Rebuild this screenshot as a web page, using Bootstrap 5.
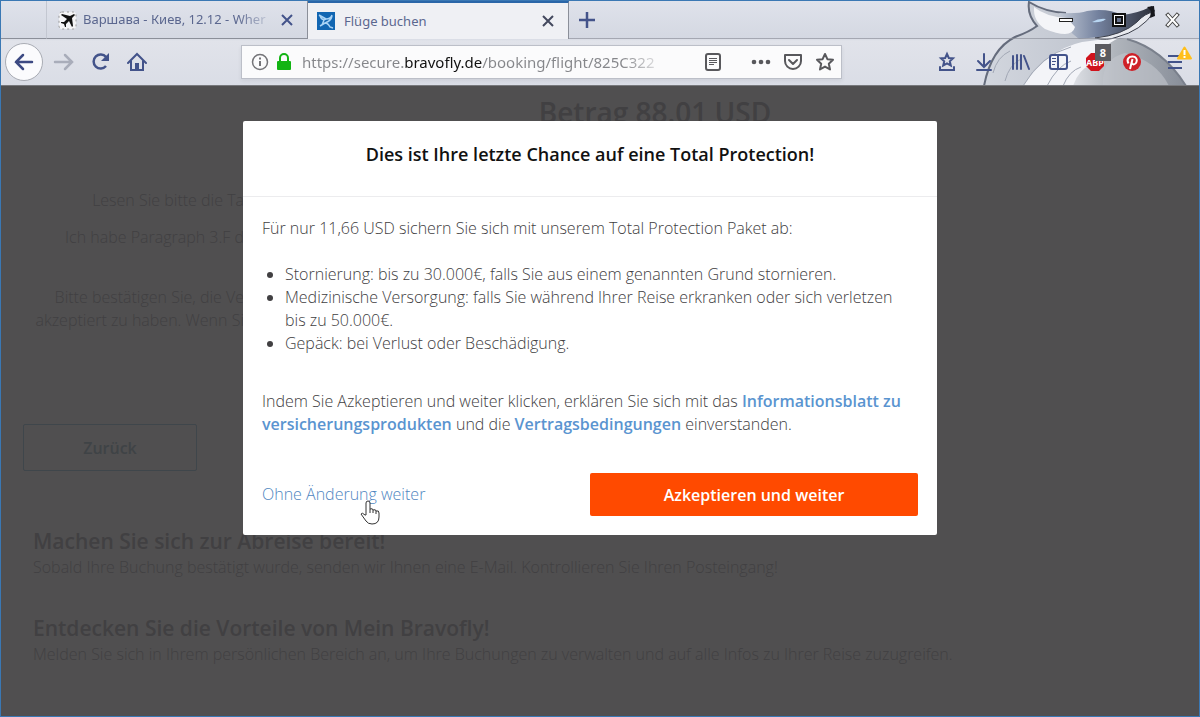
<!DOCTYPE html>
<html lang="de">
<head>
<meta charset="utf-8">
<meta name="viewport" content="width=device-width, initial-scale=1">
<title>Flüge buchen</title>
<link href="https://cdn.jsdelivr.net/npm/bootstrap@5.3.0/dist/css/bootstrap.min.css" rel="stylesheet">
<style>
  body { font-family: "Open Sans", sans-serif; font-size: 16px; line-height: 23px; font-weight: 300; color: #4c4c50; }
  .window-frame { border: 1px solid #3a78b4; }

  /* browser chrome */
  .chrome { background: linear-gradient(#dfe2eb, #d4d8e2 37px, #e1e3ea 40px, #dadde6); color: #43538a; font-family: "Noto Sans", sans-serif; font-weight: 400; border-bottom: 1px solid #77787c; }
  .fox { right: 0; top: 0; width: 224px; height: 84px; }
  .tab-strip { height: 38px; }
  .tab-item { border-right: 1px solid #8b8f99; border-bottom: 1px solid #8b8f99; font-size: 13px; color: #5b678f; }
  .tab-stub { width: 46px; border-right-color: #c3c7d1; }
  .tab-wide { width: 261px; }
  .tab-item.tab-active { background: #eff0f4; border-top: 2px solid #2a66a8; border-bottom: 0; }
  .tab-name { -webkit-mask-image: linear-gradient(to right, #000 80%, transparent); mask-image: linear-gradient(to right, #000 80%, transparent); }
  .tab-item a { color: #5b678f; }
  .tab-rest { border-bottom: 1px solid #8b8f99aa; }
  .tool-row { height: 46px; }
  .icon-btn { color: inherit; line-height: 0; }
  .round-btn, .round-btn:hover { width: 38px; height: 38px; background: #fbfbfd; border: 1px solid #a9acb4; }
  .address { flex: 0 1 601px; margin-left: 94px; height: 34px; background: #fbfbfc; border: 1px solid #bcbfc8; padding: 0 6px 0 8px; }
  .address-icons { gap: 12px; }
  .address-input { min-width: 0; font-size: 15px; line-height: 24px; color: transparent; -webkit-text-fill-color: transparent; outline: 0;
    background: linear-gradient(to right, #85868a 101px, #111 101px 180px, #85868a 180px 320px, #85868a22 360px); -webkit-background-clip: text; background-clip: text; }
  .tool-icons { gap: 13px; padding-right: 6px; }
  .counter { left: 12px; top: -6px; width: 16px; height: 17px; font-size: 11px; line-height: 17px; background: #5b5b60; }

  /* booking page behind the dialog */
  .page { background: #504f50; color: #414042; }
  .page-total { font-size: 28px; line-height: 36px; font-weight: 600; padding: 8px 0 0 110px; }
  .page h2 { font-size: 21px; line-height: 30px; font-weight: 600; margin: 0; }
  .page-body { padding: 59px 32px 0 22px; }
  .terms { width: 221px; }
  .terms p { margin-bottom: 14px; }
  .terms .terms-last { margin: 37px 0 92px; }
  .back-btn, .back-btn:hover { width: 174px; height: 47px; border: 1px solid #3f464b; border-radius: 2px; color: #3f4346; font-weight: 600; }
  .page-info { padding: 55px 0 0 10px; }
  .page-info p { margin: 0 0 34px; }

  /* dialog */
  .offer-layer { padding: 35px 20px 0 0; }
  .offer { width: 694px; background: #fff; border-radius: 2px; }
  .offer-head { padding: 19px 19px 28px; border-bottom: 1px solid #ececee; }
  .offer-head h1 { font-size: 18px; line-height: 28px; font-weight: 600; color: #111; }
  .offer-body { padding: 20px 19px 19px; }
  .offer-body p, .offer-list { margin-bottom: 23px; }
  .offer-list { padding: 0 16px 0 23px; }
  .offer-list + p { margin: 35px 0 37px; }
  .offer a { color: #5a94d0; }
  .offer .skip { color: #4f86bf; }
  .accept, .accept:hover { background: #ff4a00; color: #fff; font-weight: 600; width: 328px; height: 43px; border-radius: 2px; }
  .hand { left: 96px; top: 16px; }
</style>
</head>
<body>
<div class="window-frame min-vh-100 d-flex flex-column">
  <header class="chrome position-relative">
    <svg class="fox position-absolute" viewBox="0 0 224 84" aria-hidden="true">
      <defs>
        <linearGradient id="fur" x1="0" y1="0" x2="1" y2="0"><stop offset="0" stop-color="#d2d6de"/><stop offset="1" stop-color="#bfc4ce"/></linearGradient>
        <linearGradient id="face" x1="0" y1="0" x2="1" y2="0"><stop offset="0" stop-color="#c3cad6"/><stop offset=".4" stop-color="#74829f"/><stop offset="1" stop-color="#2b2e38"/></linearGradient>
        <linearGradient id="tail" x1="0" y1="0" x2="1" y2="0"><stop offset="0" stop-color="#e3e5ea"/><stop offset=".4" stop-color="#b0b5bc"/><stop offset="1" stop-color="#878d98"/></linearGradient>
      </defs>
      <path d="M105 40Q130 32 152 38Q188 48 211 85H92Z" fill="url(#tail)"/>
      <path d="M152 38Q188 48 211 85" fill="none" stroke="#7a808c" stroke-width="2"/>
      <path d="M128 85Q126 58 150 52Q182 60 194 85Z" fill="#c3c7cd" opacity=".6"/>
      <path d="M9 85Q16 48 40 36Q54 31 62 25Q52 14 54 1Q70 11 91 12L120 16L125 38Q92 62 80 85Z" fill="url(#fur)"/>
      <path d="M9 85Q16 48 40 36Q54 31 62 25Q52 14 54 1Q70 11 91 12" fill="none" stroke="#656c7c" stroke-width="2"/>
      <path d="M48 85Q72 49 107 41L146 36Q124 46 116 64Q104 68 98 85Z" fill="#f3f4f8"/>
      <path d="M48 85Q66 54 96 46M72 85Q82 65 96 60M88 85Q94 70 106 66M18 72Q22 56 35 50M30 80Q34 64 46 58" fill="none" stroke="#a2a8b5"/>
      <path d="M84 12Q104 13 112 10Q134 7 146 14Q162 13 177 5L180 10Q165 27 142 34L104 38Q92 30 84 12Z" fill="url(#face)"/>
      <path d="M59 6Q71 16 92 17L100 26Q98 33 90 33Q82 33 70 28Q58 20 59 6Z" fill="#f4f5f8"/>
      <path d="M120 37Q148 34 162 21Q170 12 179 11Q166 30 142 36Q132 40 120 37Z" fill="#e8eaef" stroke="#3b3f4b"/>
      <path d="M172 6L179 5L180 15L175 17L176 10Z" fill="#17181d"/>
      <path d="M117 21Q124 17 131 18Q126 22 117 21Z" fill="#b8d6f2"/>
    </svg>
    <nav class="tab-strip d-flex position-relative" aria-label="Tabs">
      <div class="tab-item tab-stub"></div>
      <div class="tab-item tab-wide d-flex align-items-center ps-2">
        <svg width="24" height="20" viewBox="0 0 24 20" class="flex-shrink-0"><rect x="4" y="2" width="17" height="17" rx="3" fill="#f4f4f6" stroke="#999" stroke-dasharray="2 3"/><path d="M19 4l-4 2-8-2-1 1 6 4-3 3-3 0 0 1 3 1 1 3 1 0 0-3 3-3 3 6 1-1-1-8 3-3z" fill="#111"/></svg>
        <a href="#" class="tab-name text-nowrap flex-grow-1 text-decoration-none ms-1">Варшава - Киев, 12.12 - Wher</a>
        <button class="btn p-0 border-0 icon-btn me-2" aria-label="Tab schließen"><svg width="24" height="16" viewBox="0 0 24 16"><path d="M7 3l10 10M17 3L7 13" stroke="#43538a" stroke-width="2"/></svg></button>
      </div>
      <div class="tab-item tab-wide tab-active d-flex align-items-center ps-2">
        <svg width="20" height="20" viewBox="0 0 20 20"><rect x="1" y="1" width="18" height="18" fill="#1266b2"/><path d="M3 4l7 4q5 0 6-4M4 5q2 5 6 3M16 5q-1 5-7 7l-5 3M9 12q3 0 5 4l3 1M8 9l-2 5" fill="none" stroke="#a9d3f5" stroke-width="1.500"/></svg>
        <a href="#" class="text-decoration-none flex-grow-1 ms-2">Flüge buchen</a>
        <button class="btn p-0 border-0 icon-btn mx-2" aria-label="Tab schließen"><svg width="24" height="16" viewBox="0 0 24 16"><path d="M7 3l10 10M17 3L7 13" stroke="#44495e" stroke-width="2"/></svg></button>
      </div>
      <div class="tab-rest flex-grow-1 d-flex align-items-center">
        <button class="btn p-0 border-0 icon-btn ms-2" aria-label="Neuer Tab"><svg width="20" height="20" viewBox="0 0 20 20"><path d="M10 2v16M2 10h16" stroke="#43538a" stroke-width="2.500"/></svg></button>
        <div class="ms-auto d-flex">
          <button class="btn p-0 border-0 icon-btn" aria-label="Minimieren"><svg width="54" height="20" viewBox="0 0 54 20"><rect x="20.500" y="8.500" width="13" height="3" fill="#fff" stroke="#222"/></svg></button>
          <button class="btn p-0 border-0 icon-btn" aria-label="Maximieren"><svg width="52" height="20" viewBox="0 0 52 20"><rect x="19" y="3" width="14" height="14" fill="#111"/><rect x="21" y="5" width="10" height="10" fill="#fff"/><rect x="22" y="6" width="8" height="8" fill="#111"/><rect x="24" y="8" width="4" height="4" fill="#667089"/></svg></button>
          <button class="btn p-0 border-0 icon-btn" aria-label="Schließen"><svg width="54" height="20" viewBox="0 0 54 20" stroke-linecap="square"><path d="M23 5l9 10M32 5l-9 10" stroke="#444" stroke-width="4"/><path d="M23 5l9 10M32 5l-9 10" stroke="#fff" stroke-width="2"/></svg></button>
        </div>
      </div>
    </nav>
    <div class="tool-row d-flex align-items-center position-relative ps-1">
      <button class="btn p-0 icon-btn round-btn rounded-circle" aria-label="Zurück"><svg width="24" height="24" viewBox="0 0 24 24" fill="none" stroke="#3d4a83" stroke-width="2.500" stroke-linecap="round"><path d="M20 12H4M11 5l-7 7 7 7"/></svg></button>
      <button class="btn p-0 border-0 icon-btn ms-2" aria-label="Vor"><svg width="24" height="24" viewBox="0 0 24 24" fill="none" stroke="#a9adba" stroke-width="2.500" stroke-linecap="round"><path d="M4 12h16M14 5l7 7-7 7"/></svg></button>
      <button class="btn p-0 border-0 icon-btn ms-3" aria-label="Neu laden"><svg width="20" height="20" viewBox="0 0 20 20" fill="none" stroke="#43538a"><path d="M15 14A7 7 0 1 1 15 5" stroke-width="2.500"/><path d="M18 1v8h-8z" fill="#43538a" stroke="none"/></svg></button>
      <button class="btn p-0 border-0 icon-btn ms-3" aria-label="Startseite"><svg width="20" height="20" viewBox="0 0 20 20" fill="none" stroke="#43538a" stroke-width="2"><path d="M1 11l9-9 9 9M4 9v9h12V9" stroke-linecap="round"/><path d="M8 18v-7h4v7z" fill="#43538a" stroke="none"/></svg></button>
      <div class="address d-flex align-items-center shadow-sm">
        <svg width="20" height="20" viewBox="0 0 20 20" fill="none" stroke="#747478" stroke-width="1.500"><circle cx="10" cy="10" r="7.500"/><path d="M10 9v5M10 5.500v2" stroke-width="2"/></svg>
        <svg class="ms-1" width="20" height="20" viewBox="0 0 20 20"><rect x="3" y="9" width="14" height="9" rx="1" fill="#12b413"/><path d="M6 10V6a4 4 0 0 1 8 0v4" fill="none" stroke="#12b413" stroke-width="2"/></svg>
        <input class="address-input border-0 p-0 ms-2 flex-grow-1" type="text" aria-label="Adresse" value="https://secure.bravofly.de/booking/flight/825C322">
        <div class="address-icons d-flex">
          <svg class="me-3" width="20" height="20" viewBox="0 0 20 20" fill="none" stroke="#58585c" stroke-width="2"><rect x="3" y="2" width="14" height="16" rx="2"/><path d="M6 6.500h8M6 8.500h8M6 10.500h8M6 12.500h5" stroke-width="1"/></svg>
          <svg width="20" height="20" viewBox="0 0 20 20" fill="#58585c"><circle cx="3" cy="10" r="2.300"/><circle cx="10" cy="10" r="2.300"/><circle cx="17" cy="10" r="2.300"/></svg>
          <svg width="20" height="20" viewBox="0 0 20 20" fill="none" stroke="#58585c" stroke-width="2" stroke-linejoin="round"><path d="M2 3h16v6a8 8 0 0 1-16 0z"/><path d="M6 8l4 4 4-4" stroke-linecap="round"/></svg>
          <svg width="20" height="20" viewBox="0 0 20 20" fill="none" stroke="#58585c" stroke-width="2" stroke-linejoin="round"><path d="M10 2l2.400 5.200 5.600.6-4.200 3.900 1.200 5.700L10 14.600l-5 2.800 1.200-5.700L2 7.800l5.600-.6z"/></svg>
        </div>
      </div>
      <div class="tool-icons ms-auto d-flex align-items-center">
        <button class="btn p-0 border-0 icon-btn" aria-label="Lesezeichen"><svg width="24" height="24" viewBox="0 0 24 24" fill="none" stroke="#43538a" stroke-width="2"><path d="M12 4l1.800 4 4.200.4-3.200 2.900 1 4.200L12 13.300l-3.800 2.200 1-4.200L6 8.400l4.200-.4z"/><path d="M5 17v3h14v-3" stroke-linecap="round"/></svg></button>
        <button class="btn p-0 border-0 icon-btn" aria-label="Downloads"><svg width="24" height="24" viewBox="0 0 24 24" fill="none" stroke="#43538a" stroke-width="2" stroke-linecap="round"><path d="M12 4v13M6 11l6 6 6-6M5 20h14"/></svg></button>
        <button class="btn p-0 border-0 icon-btn" aria-label="Bibliothek"><svg width="24" height="24" viewBox="0 0 24 24" fill="none" stroke="#43538a" stroke-width="2" stroke-linecap="round"><path d="M4 6v13M8 5v14M12 5v14M15 6l5 13"/></svg></button>
        <button class="btn p-0 border-0 icon-btn" aria-label="Seitenleiste"><svg width="24" height="24" viewBox="0 0 24 24" fill="none" stroke="#43538a" stroke-width="2"><rect x="4" y="5" width="17" height="14" rx="2"/><path d="M12 5v14"/><path d="M6 8.500h4M6 11.500h4M6 14.500h3" stroke-width="1"/></svg></button>
        <button class="btn p-0 border-0 icon-btn position-relative" aria-label="Werbeblocker"><svg width="24" height="24" viewBox="0 0 24 24"><path d="M8 3h8l5 5v8l-5 5H8l-5-5V8z" fill="#d0131c"/><text x="12" y="16" text-anchor="middle" font-size="9" font-weight="700" fill="#fff">ABP</text></svg><span class="counter position-absolute text-white fw-bold text-center">8</span></button>
        <button class="btn p-0 border-0 icon-btn" aria-label="Pinterest"><svg width="24" height="24" viewBox="0 0 24 24"><circle cx="12" cy="12" r="9" fill="#cf2027"/><path d="M8.500 13.500C6 9 9 6.500 12.500 6.500s5 3 4 5.500c-1 3-4 3-4.500 1M12.500 9L10 19" fill="none" stroke="#fff" stroke-width="2"/></svg></button>
        <button class="btn p-0 border-0 icon-btn ms-2" aria-label="Menü"><svg width="28" height="34" viewBox="0 0 28 34"><path d="M3 11h14M3 17h14M3 23h14" stroke="#43538a" stroke-width="2"/><path d="M19.500 2.500l6.500 11H13z" fill="#ffbf1c" stroke="#ffbf1c" stroke-width="2" stroke-linejoin="round"/><path d="M19.500 5v5M19.500 11v2" stroke="#fff" stroke-width="2"/></svg></button>
      </div>
    </div>
  </header>

  <main class="page flex-grow-1 position-relative">
    <p class="page-total text-center m-0">Betrag 88.01 USD</p>
    <div class="page-body">
      <div class="terms text-end text-nowrap">
        <p>Lesen Sie bitte die Ta</p>
        <p>Ich habe Paragraph 3.F d</p>
        <p class="terms-last">Bitte bestätigen Sie, die Ve<br>akzeptiert zu haben. Wenn Si</p>
      </div>
      <button class="btn back-btn" type="button">Zurück</button>
      <div class="page-info">
        <h2>Machen Sie sich zur Abreise bereit!</h2>
        <p>Sobald Ihre Buchung bestätigt wurde, senden wir Ihnen eine E-Mail. Kontrollieren Sie Ihren Posteingang!</p>
        <h2>Entdecken Sie die Vorteile von Mein Bravofly!</h2>
        <p>Melden Sie sich in Ihrem persönlichen Bereich an, um Ihre Buchungen zu verwalten und auf alle Infos zu Ihrer Reise zuzugreifen.</p>
      </div>
    </div>

    <div class="offer-layer position-absolute top-0 start-0 w-100 d-flex justify-content-center">
      <section class="offer" role="dialog" aria-labelledby="offer-title">
        <div class="offer-head text-center">
          <h1 class="m-0" id="offer-title">Dies ist Ihre letzte Chance auf eine Total Protection!</h1>
        </div>
        <div class="offer-body">
          <p>Für nur 11,66 USD sichern Sie sich mit unserem Total Protection Paket ab:</p>
          <ul class="offer-list">
            <li>Stornierung: bis zu 30.000€, falls Sie aus einem genannten Grund stornieren.</li>
            <li>Medizinische Versorgung: falls Sie während Ihrer Reise erkranken oder sich verletzen bis zu 50.000€.</li>
            <li>Gepäck: bei Verlust oder Beschädigung.</li>
          </ul>
          <p>Indem Sie Azkeptieren und weiter klicken, erklären Sie sich mit das <a href="#" class="fw-semibold text-decoration-none">Informationsblatt zu versicherungsprodukten</a> und die <a href="#" class="fw-semibold text-decoration-none">Vertragsbedingungen</a> einverstanden.</p>
          <div class="d-flex justify-content-between align-items-center">
            <a href="#" class="skip text-decoration-none position-relative">Ohne Änderung weiter
              <svg class="hand position-absolute" width="24" height="28" viewBox="0 0 24 28" aria-hidden="true"><path d="M8 16V4q0-2 2-2t2 2v6q3-1 3 1 3-1 3 1 3-1 3 2v4q0 7-7 7-4 0-6-3l-5-7q1-2 4 1z" fill="#fff" stroke="#333"/><path d="M12 10v4M15 11v3M18 12v3" stroke="#333"/></svg>
            </a>
            <button class="btn accept border-0" type="button">Azkeptieren und weiter</button>
          </div>
        </div>
      </section>
    </div>
  </main>
</div>
<script src="https://cdn.jsdelivr.net/npm/bootstrap@5.3.0/dist/js/bootstrap.bundle.min.js"></script>
</body>
</html>
